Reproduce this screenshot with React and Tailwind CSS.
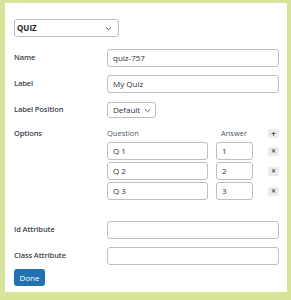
import React from 'react';

const font = { fontFamily: '"Open Sans", "Noto Sans", sans-serif' };

const Row = ({ label, children, className = '' }) => (
    <div className={`flex items-center ${className}`}>
        <div className="w-[93px] shrink-0 text-[7.5px] font-semibold tracking-[-0.1px] text-[#3c434a]">{label}</div>
        {children}
    </div>
);

const TextBox = ({ value, className = '' }) => (
    <div className={`h-[18px] rounded-[3px] border border-[#bcbfc3] bg-white px-[5px] flex items-center text-[8px] text-[#2c3338] ${className}`}>
        {value}
    </div>
);

const Chevron = () => (
    <svg width="7" height="5" viewBox="0 0 7 5" fill="none" className="shrink-0">
        <path d="M0.8 1.2 L3.5 3.8 L6.2 1.2" stroke="#50575e" strokeWidth="1" />
    </svg>
);

const IconBtn = ({ children }) => (
    <div className="w-[11px] h-[9px] rounded-[1px] bg-[#ececec] flex items-center justify-center text-[#50575e] text-[8px] font-bold leading-none">
        {children}
    </div>
);

export default function App() {
    const options = [
        { q: 'Q 1', a: '1' },
        { q: 'Q 2', a: '2' },
        { q: 'Q 3', a: '3' },
    ];

    return (
        <div className="w-[291px] h-[300px] bg-[#d6e59a] pl-[5px] pt-[3px]" style={font}>
            <div className="w-[282px] h-[289px] bg-white pt-[16px] pl-[9px] pr-[8px]">
                <div className="w-[105px] h-[18px] rounded-[3px] border border-[#bcbfc3] flex items-center justify-between pl-[2px] pr-[6px]">
                    <span className="text-[8px] font-bold text-[#1d2327]">QUIZ</span>
                    <Chevron />
                </div>

                <Row label="Name" className="mt-[12px]">
                    <TextBox value="quiz-757" className="flex-1" />
                </Row>
                <Row label="Label" className="mt-[8px]">
                    <TextBox value="My Quiz" className="flex-1" />
                </Row>
                <Row label="Label Position" className="mt-[9px]">
                    <div className="w-[49px] h-[16px] rounded-[3px] border border-[#bcbfc3] flex items-center justify-between pl-[5px] pr-[4px]">
                        <span className="text-[8px] text-[#2c3338]">Default</span>
                        <Chevron />
                    </div>
                </Row>

                <Row label="Options" className="mt-[11px] h-[9px]">
                    <div className="flex-1 flex items-center text-[7.5px] text-[#50575e]">
                        <span className="w-[109px]">Question</span>
                        <span className="w-[52px] pl-[5px]">Answer</span>
                        <IconBtn>+</IconBtn>
                    </div>
                </Row>
                <div className="ml-[93px] mt-[4px] flex flex-col gap-[2px]">
                    {options.map((o) => (
                        <div key={o.q} className="flex items-center">
                            <TextBox value={o.q} className="w-[101px]" />
                            <TextBox value={o.a} className="w-[37px] ml-[8px]" />
                            <div className="ml-[15px]">
                                <IconBtn>×</IconBtn>
                            </div>
                        </div>
                    ))}
                </div>

                <Row label="Id Attribute" className="mt-[21px]">
                    <TextBox value="" className="flex-1" />
                </Row>
                <Row label="Class Attribute" className="mt-[8px]">
                    <TextBox value="" className="flex-1" />
                </Row>

                <button className="mt-[4px] w-[31px] h-[17px] rounded-[3px] bg-[#2271b1] text-white text-[8px] flex items-center justify-center">
                    Done
                </button>
            </div>
        </div>
    );
}
